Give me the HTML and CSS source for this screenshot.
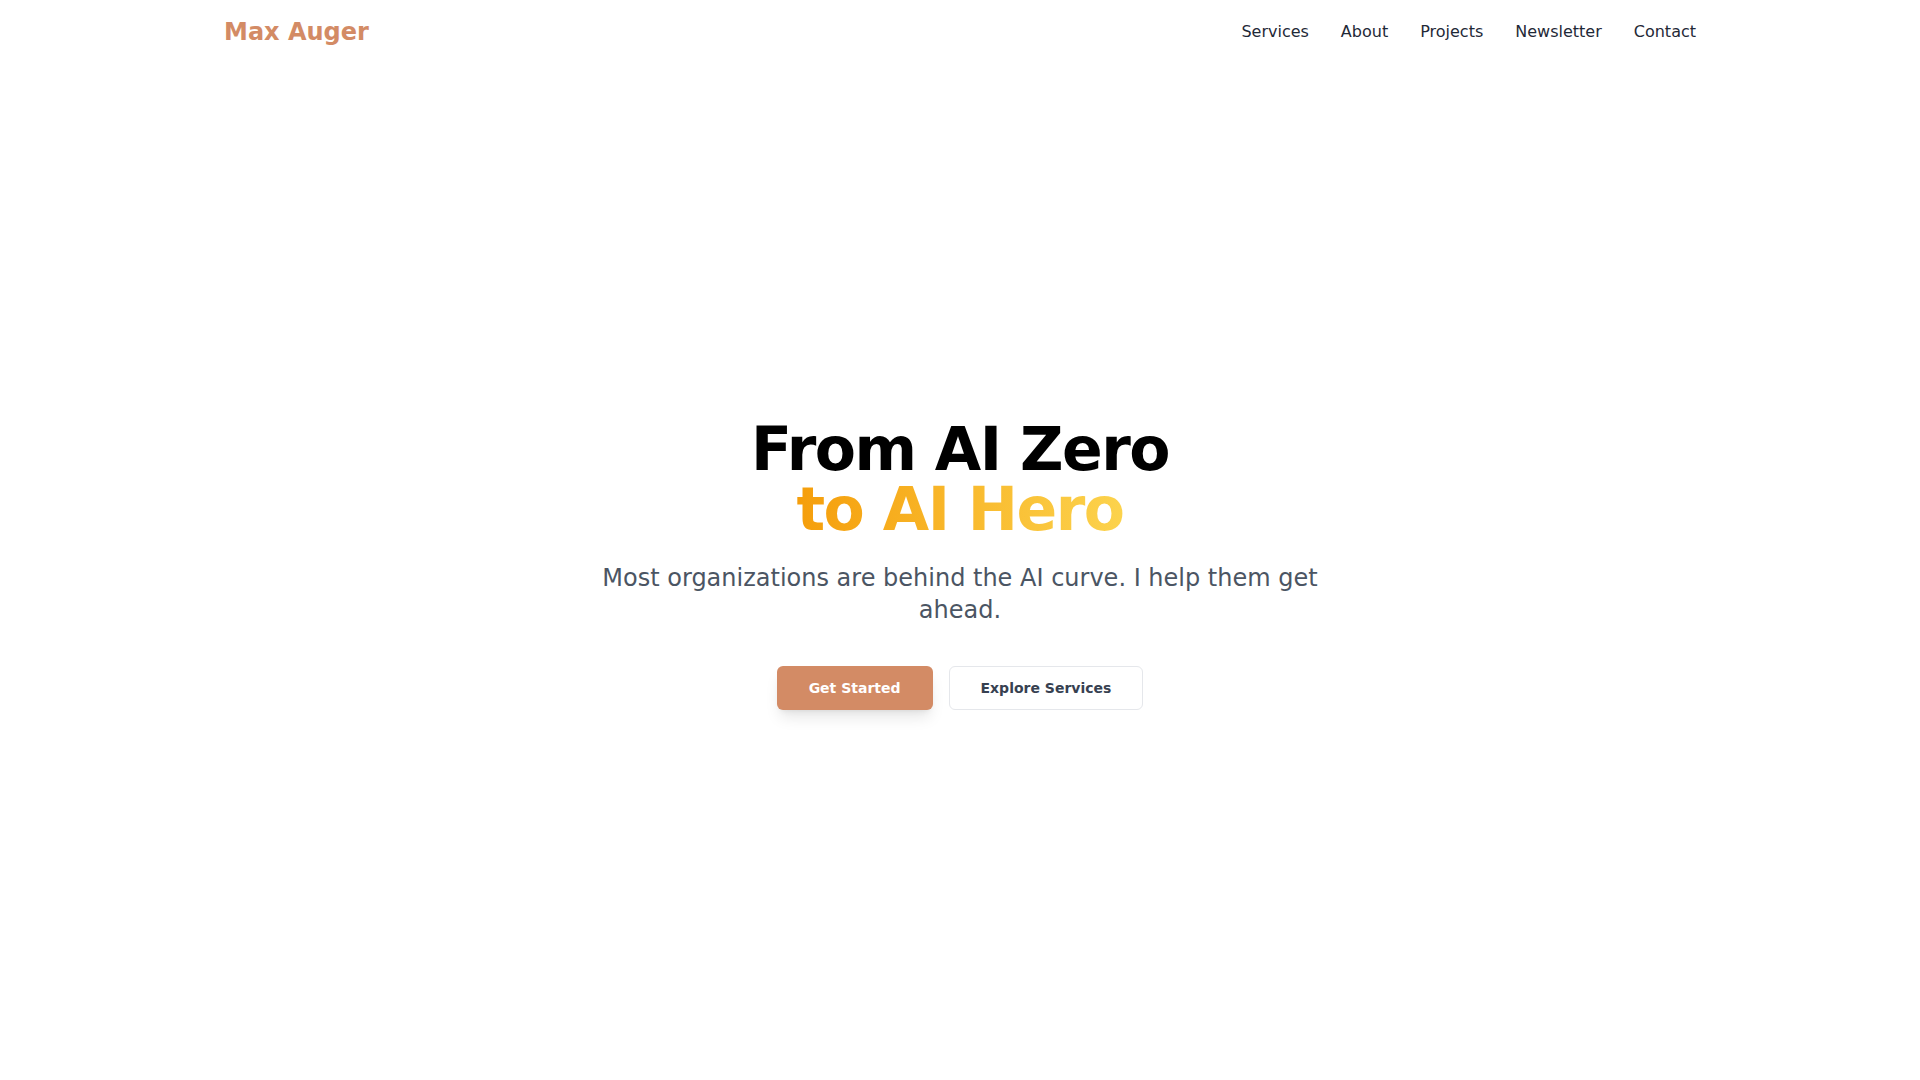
FILE: index.html
```html
<!DOCTYPE html>
<html lang="en">
<head>
<meta charset="utf-8">
<title>Max Auger</title>
<link rel="stylesheet" href="styles.css">
</head>
<body>
<header class="site-header">
  <div class="container header-inner">
    <a class="logo" href="#">Max Auger</a>
    <nav class="nav">
      <a href="#">Services</a>
      <a href="#">About</a>
      <a href="#">Projects</a>
      <a href="#">Newsletter</a>
      <a href="#">Contact</a>
    </nav>
  </div>
</header>
<main class="hero">
  <div class="hero-content">
    <h1 class="hero-title">From AI Zero<br><span class="accent">to AI Hero</span></h1>
    <p class="hero-sub">Most organizations are behind the AI curve. I help them get ahead.</p>
    <div class="actions">
      <a class="btn btn-primary" href="#">Get Started</a>
      <a class="btn btn-outline" href="#">Explore Services</a>
    </div>
  </div>
</main>
</body>
</html>
```
FILE: styles.css
```css
* { box-sizing: border-box; }
html, body { margin: 0; padding: 0; }
body {
  font-family: "DejaVu Sans", "Liberation Sans", sans-serif;
  background: #ffffff;
  color: #111827;
  min-height: 100vh;
}
a { text-decoration: none; color: inherit; }

.container {
  max-width: 1536px;
  margin: 0 auto;
  padding: 0 32px;
}
.header-inner {
  height: 64px;
  display: flex;
  align-items: center;
  justify-content: space-between;
}
.logo {
  font-size: 24px;
  line-height: 32px;
  font-weight: 700;
  color: #d38b65;
}
.nav {
  display: flex;
  gap: 32px;
}
.nav a {
  font-size: 16px;
  line-height: 24px;
  color: #1f2937;
}

.hero {
  height: calc(100vh - 64px);
  display: flex;
  align-items: center;
  justify-content: center;
  padding-bottom: 15px;
  text-align: center;
}
.hero-content {
  display: flex;
  flex-direction: column;
  align-items: center;
}
.hero-title {
  margin: 0 0 23px;
  font-size: 60px;
  line-height: 60px;
  font-weight: 700;
  letter-spacing: -0.025em;
  color: #000000;
}
.accent {
  background: linear-gradient(to right, #f59e0b, #fcd34d);
  -webkit-background-clip: text;
  background-clip: text;
  color: transparent;
}
.hero-sub {
  margin: 0;
  max-width: 768px;
  font-size: 24px;
  line-height: 32px;
  color: #4b5563;
}
.actions {
  margin-top: 40px;
  display: flex;
  gap: 16px;
}
.btn {
  display: inline-block;
  font-size: 14px;
  line-height: 20px;
  font-weight: 700;
  padding: 12px 32px;
  border-radius: 6px;
}
.btn-primary {
  background: #d38b65;
  color: #ffffff;
  box-shadow: 0 10px 15px -3px rgba(0,0,0,0.1), 0 4px 6px -4px rgba(0,0,0,0.1);
}
.btn-outline {
  background: #ffffff;
  color: #374151;
  border: 1px solid #e5e7eb;
  padding: 11px 31px;
}
```
